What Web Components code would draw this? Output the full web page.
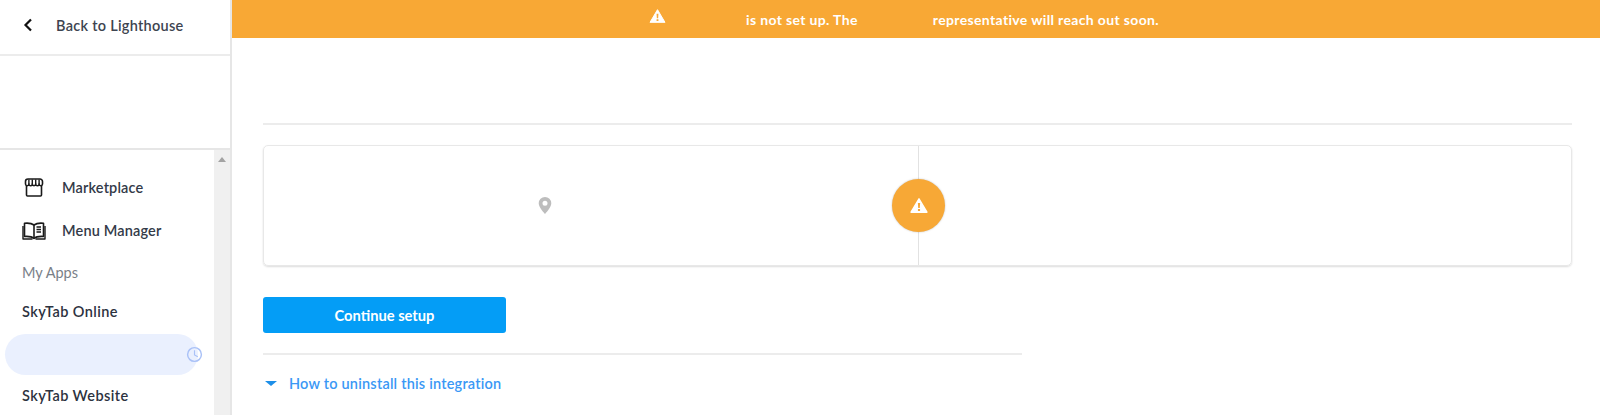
<!DOCTYPE html>
<html>
<head>
<meta charset="utf-8">
<title>Integration setup</title>
<style>
    html, body {
        margin: 0;
        height: 415px;
        overflow: hidden;
        background: #fff;
        font-family: "Lato", "Open Sans", sans-serif;
    }
</style>
</head>
<body>
<app-shell>
    <side-nav slot="nav">
        <nav-item>
            <svg slot="icon" width="20" height="19" viewBox="0 0 20 19" fill="none" stroke="#1a1a1a" stroke-width="1.600" stroke-linejoin="round">
                <path d="M2.500 8v9a1 1 0 0 0 1 1h13a1 1 0 0 0 1-1V8"/>
                <path d="M4 1h12a2.500 2.500 0 0 1 2.500 2.500V6a1.700 1.700 0 0 1-3.400 0 1.700 1.700 0 0 1-3.400 0 1.700 1.700 0 0 1-3.400 0 1.700 1.700 0 0 1-3.400 0 1.700 1.700 0 0 1-3.400 0V3.500A2.500 2.500 0 0 1 4 1z"/>
                <path d="M4.900 1.500V6M8.300 1.500V6M11.700 1.500V6M15.100 1.500V6" stroke-width="1.400"/>
            </svg>
            Marketplace
        </nav-item>
        <nav-item>
            <svg slot="icon" width="24" height="18" viewBox="0 0 24 18" fill="none" stroke="#1a1a1a" stroke-width="1.600" stroke-linejoin="round">
                <path d="M12 3C10 1.500 6.500.9 2.500 1.300v13.200C6.500 14.200 10 14.700 12 16.500c2-1.800 5.500-2.300 9.500-2V1.300C17.500.9 14 1.500 12 3z"/>
                <path d="M12 3v13.500"/>
                <path d="M1 4v13h9.500M23 4v13h-9.500" stroke-width="1.400"/>
                <path d="M14.500 5h4.500M14.500 7.500h4.500M14.500 10h4.500" stroke-width="1.300"/>
            </svg>
            Menu Manager
        </nav-item>
        <nav-label>My Apps</nav-label>
        <app-link>SkyTab Online</app-link>
        <app-link pending></app-link>
        <app-link>SkyTab Website</app-link>
    </side-nav>
    <alert-banner>
        <span>is not set up. The</span>
        <span slot="end">representative will reach out soon.</span>
    </alert-banner>
    <setup-panel>
        <status-card></status-card>
        <action-button slot="action">Continue setup</action-button>
        <help-toggle slot="help">How to uninstall this integration</help-toggle>
    </setup-panel>
</app-shell>

<script>
const warnPath = 'M12 2.500 23.200 21.500H.8z'

class AppShell extends HTMLElement {
    constructor() {
        super()
        this.attachShadow({mode: 'open'})
        this.shadowRoot.innerHTML = `
            <style>
                :host {
                    display: flex;
                    height: 415px;
                    overflow: hidden;
                }
                .main {
                    flex: 1;
                    min-width: 0;
                }
            </style>
            <slot name="nav"></slot>
            <div class="main"><slot></slot></div>
        `
    }
}

class SideNav extends HTMLElement {
    constructor() {
        super()
        this.attachShadow({mode: 'open'})
        this.shadowRoot.innerHTML = `
            <style>
                :host {
                    display: flex;
                    flex-direction: column;
                    box-sizing: border-box;
                    width: 232px;
                    flex: none;
                    height: 415px;
                    border-right: 2px solid #e6e6e6;
                }
                .back {
                    display: flex;
                    align-items: center;
                    box-sizing: border-box;
                    height: 56px;
                    padding: 0 0 4px 23px;
                    gap: 23px;
                    border-bottom: 2px solid #ececec;
                    color: #3d4450;
                    font-size: 14.500px;
                    font-weight: 600;
                    letter-spacing: .28px;
                }
                .logo {
                    height: 94px;
                    box-sizing: border-box;
                    border-bottom: 2px solid #e6e6e6;
                }
                .scroll {
                    flex: 1;
                    display: flex;
                    min-height: 0;
                }
                .list {
                    flex: 1;
                    min-width: 0;
                    padding-top: 16px;
                }
                .bar {
                    width: 16px;
                    flex: none;
                    background: #f0f0f0;
                    display: flex;
                    justify-content: center;
                    padding-top: 7px;
                    box-sizing: border-box;
                }
                .arrow {
                    width: 0;
                    height: 0;
                    border: 4px solid transparent;
                    border-top: 0;
                    border-bottom: 5px solid #a3a3a3;
                }
            </style>
            <div class="back">
                <svg width="10" height="14" viewBox="0 0 10 14" fill="none" stroke="#111" stroke-width="2.200">
                    <path d="M8 1.500 2.500 7 8 12.500"/>
                </svg>
                <span>Back to Lighthouse</span>
            </div>
            <div class="logo"></div>
            <div class="scroll">
                <div class="list"><slot></slot></div>
                <div class="bar"><div class="arrow"></div></div>
            </div>
        `
    }
}

class NavItem extends HTMLElement {
    constructor() {
        super()
        this.attachShadow({mode: 'open'})
        this.shadowRoot.innerHTML = `
            <style>
                :host {
                    display: flex;
                    align-items: center;
                    height: 43px;
                    color: #333a48;
                    font-size: 14.500px;
                    font-weight: 600;
                    letter-spacing: .16px;
                }
                .icon {
                    width: 62px;
                    flex: none;
                    display: flex;
                    justify-content: center;
                    padding-left: 6px;
                    box-sizing: border-box;
                }
            </style>
            <div class="icon"><slot name="icon"></slot></div>
            <slot></slot>
        `
    }
}

class NavLabel extends HTMLElement {
    constructor() {
        super()
        this.attachShadow({mode: 'open'})
        this.shadowRoot.innerHTML = `
            <style>
                :host {
                    display: block;
                    padding: 12px 0 9px 22px;
                    line-height: 18px;
                    color: #7a7f88;
                    font-size: 14.500px;
                }
            </style>
            <slot></slot>
        `
    }
}

class AppLink extends HTMLElement {
    constructor() {
        super()
        this.attachShadow({mode: 'open'})
        this.shadowRoot.innerHTML = `
            <style>
                :host {
                    display: block;
                    position: relative;
                    height: 42px;
                    line-height: 41px;
                    padding-left: 22px;
                    color: #2c3240;
                    font-size: 14.500px;
                    font-weight: 600;
                    letter-spacing: .42px;
                }
                :host([pending]) .pill {
                    display: block;
                }
                .pill {
                    display: none;
                    position: absolute;
                    left: 5px;
                    top: 1px;
                    width: 193px;
                    height: 41px;
                    border-radius: 21px;
                    background: #eaf0fe;
                }
                svg {
                    display: none;
                    position: absolute;
                    left: 186px;
                    top: 13px;
                }
                :host([pending]) svg {
                    display: block;
                }
            </style>
            <div class="pill"></div>
            <svg width="17" height="17" viewBox="0 0 18 18" fill="none" stroke="#a9c1f7" stroke-width="1.500">
                <circle cx="9" cy="9" r="7.300"/>
                <path d="M9 4.500V9.500L12.500 11.500" stroke-width="1.200"/>
            </svg>
            <slot></slot>
        `
    }
}

class AlertBanner extends HTMLElement {
    constructor() {
        super()
        this.attachShadow({mode: 'open'})
        this.shadowRoot.innerHTML = `
            <style>
                :host {
                    display: flex;
                    align-items: center;
                    box-sizing: border-box;
                    height: 38px;
                    padding-left: 417px;
                    background: #f8a835;
                    color: #fff;
                    font-size: 14px;
                    font-weight: 700;
                    letter-spacing: .35px;
                }
                svg {
                    width: 17px;
                    height: 16px;
                    margin-right: 80px;
                    margin-bottom: 6px;
                }
                .end {
                    margin-left: 75px;
                }
            </style>
            <svg viewBox="0 0 24 24">
                <path fill="#fff" stroke="#fff" stroke-width="1.500" stroke-linejoin="round" d="${warnPath}"/>
                <path fill="#f8a835" d="M10.600 8.500h2.800l-.4 7h-2zM10.600 17h2.800v2.500h-2.800z"/>
            </svg>
            <slot></slot>
            <span class="end"><slot name="end"></slot></span>
        `
    }
}

class SetupPanel extends HTMLElement {
    constructor() {
        super()
        this.attachShadow({mode: 'open'})
        this.shadowRoot.innerHTML = `
            <style>
                :host {
                    display: block;
                    padding: 85px 28px 0 31px;
                }
                .rule {
                    border-top: 2px solid #ececec;
                }
                .card {
                    margin-top: 20px;
                }
                .action {
                    margin-top: 31px;
                }
                .short {
                    width: 759px;
                    margin-top: 20px;
                }
            </style>
            <div class="rule"></div>
            <div class="card"><slot></slot></div>
            <div class="action"><slot name="action"></slot></div>
            <div class="rule short"></div>
            <slot name="help"></slot>
        `
    }
}

class StatusCard extends HTMLElement {
    constructor() {
        super()
        this.attachShadow({mode: 'open'})
        this.shadowRoot.innerHTML = `
            <style>
                :host {
                    display: grid;
                    grid-template-columns: 655px 1fr;
                    position: relative;
                    box-sizing: border-box;
                    height: 121px;
                    border: 1px solid #e8e8e8;
                    border-radius: 5px;
                    box-shadow: 0 1px 2px rgba(0, 0, 0, .14);
                }
                .left {
                    display: flex;
                    align-items: center;
                    padding-left: 274px;
                    border-right: 1px solid #e2e2e2;
                }
                .badge {
                    position: absolute;
                    left: 628px;
                    top: 33px;
                    width: 53px;
                    height: 53px;
                    border-radius: 50%;
                    background: #f7a836;
                    box-shadow: 0 0 2px rgba(0, 0, 0, .25);
                    display: flex;
                    align-items: center;
                    justify-content: center;
                }
            </style>
            <div class="left">
                <svg width="14" height="17" viewBox="0 0 14 17">
                    <path fill="#bdbdbd" fill-rule="evenodd" d="M7 0a6.300 6.300 0 0 1 6.300 6.300C13.300 10.500 7 17 7 17S.7 10.500.7 6.300A6.300 6.300 0 0 1 7 0zm0 3.800a2.500 2.500 0 1 0 0 5 2.500 2.500 0 0 0 0-5z"/>
                </svg>
            </div>
            <div></div>
            <div class="badge">
                <svg width="18" height="17" viewBox="0 0 24 24">
                    <path fill="#fff" stroke="#fff" stroke-width="2" stroke-linejoin="round" d="${warnPath}"/>
                    <path fill="#f7a836" d="M10.400 8.500h3.200l-.5 7h-2.200zM10.500 17h3v2.700h-3z"/>
                </svg>
            </div>
        `
    }
}

class ActionButton extends HTMLElement {
    constructor() {
        super()
        this.attachShadow({mode: 'open'})
        this.shadowRoot.innerHTML = `
            <style>
                :host {
                    display: flex;
                    align-items: center;
                    justify-content: center;
                    width: 243px;
                    height: 36px;
                    border-radius: 3px;
                    background: #049df6;
                    color: #fff;
                    font-size: 14.700px;
                    font-weight: 700;
                }
            </style>
            <slot></slot>
        `
    }
}

class HelpToggle extends HTMLElement {
    constructor() {
        super()
        this.attachShadow({mode: 'open'})
        this.shadowRoot.innerHTML = `
            <style>
                :host {
                    display: flex;
                    align-items: center;
                    gap: 12px;
                    height: 56px;
                    padding-left: 2px;
                    color: #3a98f5;
                    font-size: 14.500px;
                    font-weight: 600;
                    letter-spacing: .21px;
                }
                .caret {
                    width: 0;
                    height: 0;
                    border: 6px solid transparent;
                    border-bottom: 0;
                    border-top: 5px solid #1d8fe8;
                }
            </style>
            <div class="caret"></div>
            <slot></slot>
        `
    }
}

customElements.define('app-shell', AppShell)
customElements.define('side-nav', SideNav)
customElements.define('nav-item', NavItem)
customElements.define('nav-label', NavLabel)
customElements.define('app-link', AppLink)
customElements.define('alert-banner', AlertBanner)
customElements.define('setup-panel', SetupPanel)
customElements.define('status-card', StatusCard)
customElements.define('action-button', ActionButton)
customElements.define('help-toggle', HelpToggle)
</script>
</body>
</html>
